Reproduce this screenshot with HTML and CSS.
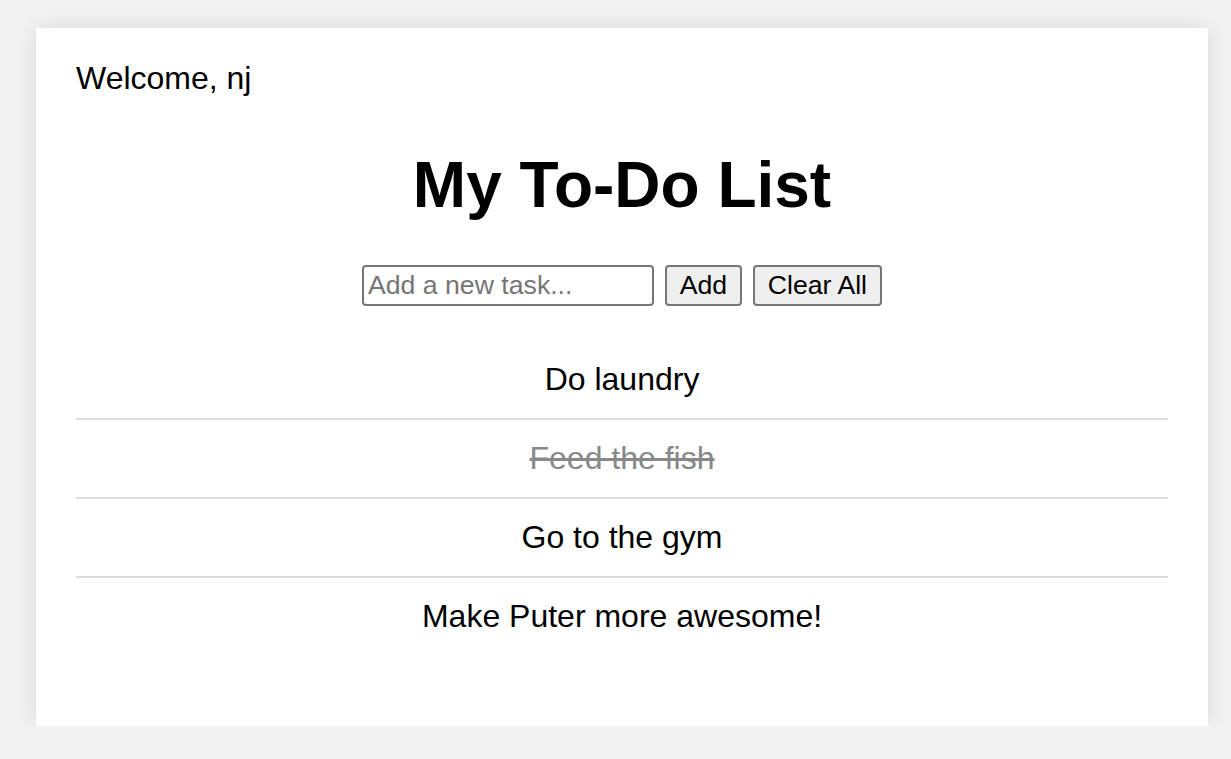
FILE: index.html
```html
<!DOCTYPE html>
<html>
<head>
<meta charset="utf-8">
<link rel="stylesheet" href="styles.css">
</head>
<body>
<div class="card">
  <div class="welcome">Welcome, nj</div>
  <h1 class="title">My To-Do List</h1>
  <div class="add-row">
    <input class="task-input" type="text" placeholder="Add a new task...">
    <button class="btn">Add</button>
    <button class="btn">Clear All</button>
  </div>
  <ul class="tasks">
    <li class="task">Do laundry</li>
    <li class="task done">Feed the fish</li>
    <li class="task">Go to the gym</li>
    <li class="task">Make Puter more awesome!</li>
  </ul>
</div>
</body>
</html>
```
FILE: styles.css
```css
html, body {
  margin: 0;
  background: #f2f2f2;
}
body {
  padding: 28px 23px 0 36px;
  font-family: "Liberation Sans", Arial, sans-serif;
  font-size: 32px;
  color: #000;
}
.card {
  background: #fff;
  box-shadow: 0 0 20px rgba(0, 0, 0, 0.1);
  padding: 31.5px 40px 40px;
  height: 698px;
  box-sizing: border-box;
}
.welcome {
  line-height: 36.8px;
  text-align: left;
}
.title {
  margin: 52.5px 0 42.5px;
  font-size: 64px;
  font-weight: bold;
  text-align: center;
  line-height: 73.6px;
}
.add-row {
  display: flex;
  justify-content: center;
  gap: 10.7px;
}
.task-input {
  width: 292px;
  height: 41px;
  box-sizing: border-box;
  border: 2px solid #767676;
  border-radius: 4px;
  padding: 0 4px;
  font-family: "Liberation Sans", Arial, sans-serif;
  font-size: 26.67px;
  color: #000;
  background: #fff;
  outline: none;
}
.task-input::placeholder {
  color: #757575;
}
.btn {
  height: 41px;
  box-sizing: border-box;
  border: 2px solid #767676;
  border-radius: 4px;
  background: #efefef;
  padding: 0 13px;
  font-family: "Liberation Sans", Arial, sans-serif;
  font-size: 26.67px;
  color: #000;
}
.tasks {
  list-style: none;
  margin: 34.5px 0 0;
  padding: 0;
}
.task {
  padding: 20.2px 0;
  line-height: 36.8px;
  text-align: center;
  border-bottom: 2px solid #ddd;
}
.task:last-child {
  border-bottom: none;
}
.task.done {
  text-decoration: line-through;
  color: #888;
}
```
